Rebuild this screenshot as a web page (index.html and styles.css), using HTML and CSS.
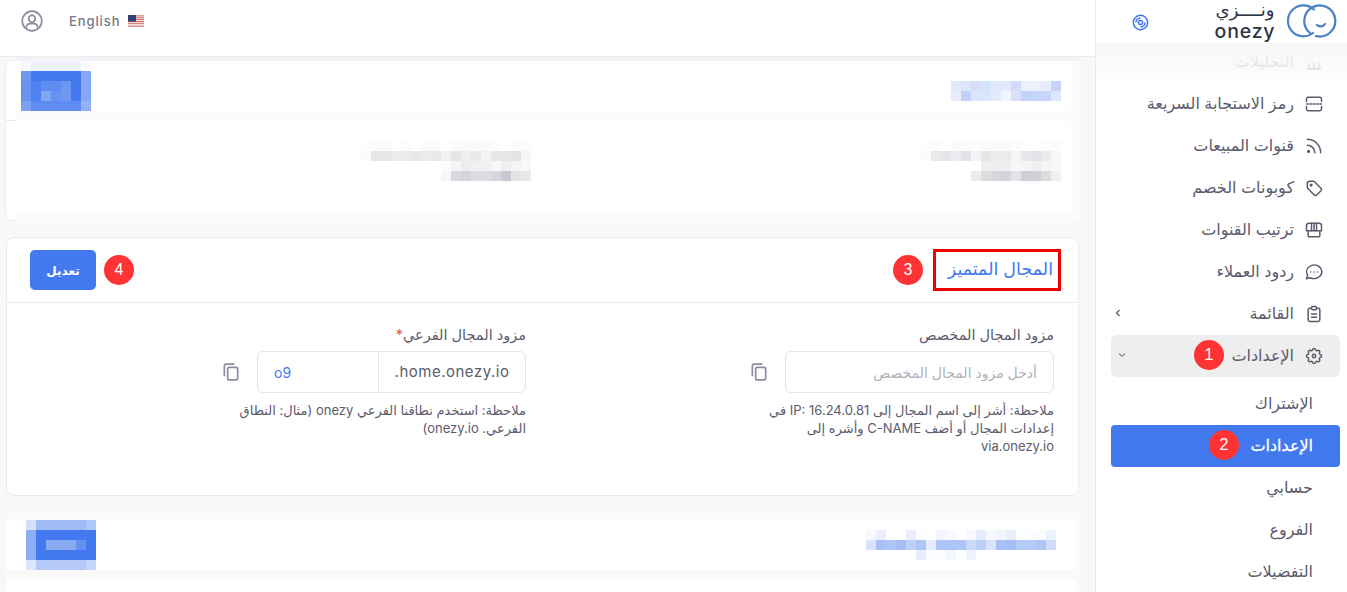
FILE: index.html
```html
<!DOCTYPE html>
<html lang="ar" dir="rtl">
<head>
    <meta charset="UTF-8">
    <meta name="viewport" content="width=device-width, initial-scale=1.0">
    <title>الإعدادات - onezy</title>
    <link rel="stylesheet" href="styles.css">
</head>
<body>
    <aside class="sidebar">
        <div class="brand">
            <svg class="brand-mark" viewBox="0 0 50 34" fill="none" stroke="#4a80c4" stroke-width="2.200" stroke-linecap="round">
                <path d="M27 5.500A15.500 15.500 0 1 0 26 29"/>
                <path d="M23 29A15.500 15.500 0 1 1 29 32"/>
                <path d="M30 21c2 2 6 2 8-1"/>
            </svg>
            <div class="brand-name">
                <span class="brand-ar">ونــــزي</span>
                <span class="brand-en" dir="ltr">onezy</span>
            </div>
            <svg class="brand-disc" viewBox="0 0 18 18" fill="none" stroke="#4278ef" stroke-width="1.600">
                <circle cx="9" cy="9" r="7.600"/>
                <circle cx="9" cy="9" r="2.200"/>
                <path d="M4.200 9A4.800 4.800 0 0 1 9 4.200M13.800 9A4.800 4.800 0 0 1 9 13.800"/>
            </svg>
        </div>
        <nav class="menu">
            <div class="menu-fade"></div>
            <a class="menu-item">
                <svg class="menu-icon" viewBox="0 0 24 24"><path d="M4 20h16M6 20v-7M12 20v-7M18 20v-7"/></svg>
                <span>التحليلات</span>
            </a>
            <a class="menu-item">
                <svg class="menu-icon" viewBox="0 0 24 24"><path d="M3 9V6a2 2 0 0 1 2-2h14a2 2 0 0 1 2 2v3M3 15v3a2 2 0 0 0 2 2h14a2 2 0 0 0 2-2v-3"/><path d="M3 12h18" stroke-dasharray="2 2"/></svg>
                <span>رمز الاستجابة السريعة</span>
            </a>
            <a class="menu-item">
                <svg class="menu-icon" viewBox="0 0 24 24"><circle cx="5.500" cy="18.500" r="1"/><path d="M4 11a9 9 0 0 1 9 9M4 4a16 16 0 0 1 16 16"/></svg>
                <span>قنوات المبيعات</span>
            </a>
            <a class="menu-item">
                <svg class="menu-icon" viewBox="0 0 24 24"><circle cx="8.500" cy="8.500" r="1"/><path d="M4 7v4.200a2 2 0 0 0 .6 1.400l7.800 7.800a2 2 0 0 0 2.800 0l5.200-5.200a2 2 0 0 0 0-2.800L12.600 4.600A2 2 0 0 0 11.200 4H7a3 3 0 0 0-3 3z"/></svg>
                <span>كوبونات الخصم</span>
            </a>
            <a class="menu-item">
                <svg class="menu-icon" viewBox="0 0 24 24"><path d="M5 13v6a1 1 0 0 0 1 1h12a1 1 0 0 0 1-1v-6"/><path d="M6 4h12a3 3 0 0 1 3 3v6H3V7a3 3 0 0 1 3-3z"/><path d="M9 4v9M12 4v9M15 4v9"/></svg>
                <span>ترتيب القنوات</span>
            </a>
            <a class="menu-item">
                <svg class="menu-icon" viewBox="0 0 24 24"><path d="M3 20l1.400-4.200C2 12.300 3 8 6.600 5.400c3.600-2.500 8.700-2.300 12 .5 3.300 2.800 3.800 7.400 1 10.700-2.800 3.300-8 4.300-12.300 2.300L3 20z"/><path d="M8 12h.01M12 12h.01M16 12h.01"/></svg>
                <span>ردود العملاء</span>
            </a>
            <a class="menu-item">
                <svg class="menu-icon" viewBox="0 0 24 24"><path d="M9 5H7a2 2 0 0 0-2 2v12a2 2 0 0 0 2 2h10a2 2 0 0 0 2-2V7a2 2 0 0 0-2-2h-2"/><rect x="9" y="3" width="6" height="4" rx="1.500"/><path d="M9 12h6M9 16h6"/></svg>
                <span>القائمة</span>
                <svg class="menu-chevron" viewBox="0 0 10 10"><path d="M6.500 2L3.500 5l3 3"/></svg>
            </a>
            <a class="menu-item menu-item-open">
                <svg class="menu-icon" viewBox="0 0 24 24"><circle cx="12" cy="12" r="2"/><path d="M10.300 4.300c.4-1.700 3-1.700 3.400 0a1.700 1.700 0 0 0 2.600 1.100c1.500-.9 3.300.8 2.400 2.400a1.700 1.700 0 0 0 1 2.500c1.800.4 1.800 3 0 3.400a1.700 1.700 0 0 0-1 2.600c.9 1.500-.9 3.300-2.400 2.400a1.700 1.700 0 0 0-2.600 1c-.4 1.800-3 1.800-3.400 0a1.700 1.700 0 0 0-2.500-1c-1.600.9-3.300-.9-2.400-2.400a1.700 1.700 0 0 0-1.100-2.600c-1.700-.4-1.700-3 0-3.400a1.700 1.700 0 0 0 1.100-2.500c-.9-1.600.8-3.300 2.400-2.400a1.700 1.700 0 0 0 2.500-1.100z"/></svg>
                <span>الإعدادات</span>
                <svg class="menu-chevron menu-chevron-light" viewBox="0 0 10 10"><path d="M2 3.500l3 3 3-3"/></svg>
                <b class="badge badge-one">1</b>
            </a>
            <div class="submenu">
                <a class="sub-item">الإشتراك</a>
                <a class="sub-item sub-item-active">الإعدادات<b class="badge badge-two">2</b></a>
                <a class="sub-item">حسابي</a>
                <a class="sub-item">الفروع</a>
                <a class="sub-item">التفضيلات</a>
            </div>
        </nav>
    </aside>

    <main class="main">
        <header class="topbar" dir="ltr">
            <svg class="topbar-user" viewBox="0 0 22 22" fill="none" stroke="#8d8c9f" stroke-width="1.700">
                <circle cx="11" cy="11" r="9.800"/>
                <circle cx="11" cy="8.700" r="3.300"/>
                <path d="M5 18c.6-3 2.600-4.300 4-4.300h4c1.400 0 3.400 1.300 4 4.300"/>
            </svg>
            <span class="topbar-lang">English</span>
            <svg class="topbar-flag" viewBox="0 0 16 12">
                <rect width="16" height="12" fill="#f3e6e6"/>
                <path d="M0 .9h16M0 2.800h16M0 4.600h16M0 6.500h16M0 8.300h16M0 11.100h16" stroke="#d0706f" stroke-width="1"/>
                <rect width="8" height="6.500" fill="#34406f"/>
            </svg>
        </header>

        <svg class="shot" width="1095" height="180" viewBox="0 57 1095 180">
            <rect x="0" y="57" width="1095" height="180" fill="#f8f8f8"/>
            <rect x="5.500" y="60.500" width="1075" height="160" rx="7" fill="#fff" stroke="#e9e9f3"/>
            <rect x="6" y="120" width="10" height="1" fill="#e9e9f3"/>
            <rect x="16" y="57" width="1067" height="4" fill="#f3f3f5"/>
            <rect x="16" y="111" width="1055" height="10" fill="#fafafa"/>
            <rect x="16" y="211" width="1065" height="10" fill="#fafafa"/>
            <rect x="1071" y="61" width="10" height="160" fill="#fbfbfb"/>
            <g class="mosaic">
                <rect x="21" y="61" fill="#f5f8fe"/><rect x="31" y="61" fill="#edf2fd"/><rect x="41" y="61" fill="#edf2fd"/><rect x="51" y="61" fill="#edf2fd"/><rect x="61" y="61" fill="#edf2fd"/><rect x="71" y="61" fill="#edf2fd"/><rect x="81" y="61" fill="#fafbff"/>
                <rect x="21" y="71" fill="#6e97f2"/><rect x="31" y="71" fill="#4279ef"/><rect x="41" y="71" fill="#4279ef"/><rect x="51" y="71" fill="#4279ef"/><rect x="61" y="71" fill="#4279ef"/><rect x="71" y="71" fill="#4279ef"/><rect x="81" y="71" fill="#86a7f4"/>
                <rect x="21" y="81" fill="#6792f1"/><rect x="31" y="81" fill="#4f82f0"/><rect x="41" y="81" fill="#5e8cf1"/><rect x="51" y="81" fill="#5e8cf1"/><rect x="61" y="81" fill="#6e97f2"/><rect x="71" y="81" fill="#4279ef"/><rect x="81" y="81" fill="#86a7f4"/>
                <rect x="21" y="91" fill="#6792f1"/><rect x="31" y="91" fill="#4f82f0"/><rect x="41" y="91" fill="#83a6f4"/><rect x="51" y="91" fill="#6792f1"/><rect x="61" y="91" fill="#6e97f2"/><rect x="71" y="91" fill="#4279ef"/><rect x="81" y="91" fill="#86a7f4"/>
                <rect x="21" y="101" fill="#7ca0f3"/><rect x="31" y="101" fill="#5e8cf1"/><rect x="41" y="101" fill="#5e8cf1"/><rect x="51" y="101" fill="#5e8cf1"/><rect x="61" y="101" fill="#5e8cf1"/><rect x="71" y="101" fill="#5e8cf1"/><rect x="81" y="101" fill="#94b1f5"/>

                <rect x="951" y="81" fill="#e3e8fb"/><rect x="961" y="81" fill="#d9e6fc"/><rect x="971" y="81" fill="#d6dcf9"/><rect x="981" y="81" fill="#d7e5fb"/><rect x="991" y="81" fill="#e2e9fc"/><rect x="1001" y="81" fill="#e2e9fc"/><rect x="1011" y="81" fill="#d0dcfa"/><rect x="1021" y="81" fill="#ebf0fd"/><rect x="1031" y="81" fill="#ebf0fd"/><rect x="1041" y="81" fill="#e6ecfc"/><rect x="1051" y="81" fill="#c5d4f9"/>
                <rect x="951" y="91" fill="#e9ecfb"/><rect x="961" y="91" fill="#c0d2f9"/><rect x="971" y="91" fill="#dbe5fc"/><rect x="981" y="91" fill="#dbe5fc"/><rect x="991" y="91" fill="#e0ebfc"/><rect x="1001" y="91" fill="#f2f5fe"/><rect x="1011" y="91" fill="#d8e2fb"/><rect x="1021" y="91" fill="#c2d2f9"/><rect x="1031" y="91" fill="#c6d6fa"/><rect x="1041" y="91" fill="#c6d6fa"/><rect x="1051" y="91" fill="#dce6fc"/>

                <rect x="921" y="141" fill="#fdfdfd"/><rect x="931" y="141" fill="#fbfbfb"/><rect x="951" y="141" fill="#fbfbfb"/><rect x="961" y="141" fill="#fbfbfb"/><rect x="971" y="141" fill="#fcfcfc"/><rect x="981" y="141" fill="#fafafa"/><rect x="991" y="141" fill="#fafafa"/><rect x="1001" y="141" fill="#fafafa"/><rect x="1011" y="141" fill="#fcfcfc"/><rect x="1021" y="141" fill="#fdfdfd"/><rect x="1041" y="141" fill="#fbfbfb"/><rect x="1051" y="141" fill="#fbfbfb"/>
                <rect x="921" y="151" fill="#fbfbfb"/><rect x="931" y="151" fill="#e9e9ec"/><rect x="941" y="151" fill="#e6e6ea"/><rect x="951" y="151" fill="#ececef"/><rect x="961" y="151" fill="#e3e3e8"/><rect x="971" y="151" fill="#f3f3f4"/><rect x="981" y="151" fill="#e6e6ea"/><rect x="991" y="151" fill="#ececee"/><rect x="1001" y="151" fill="#eaeaed"/><rect x="1011" y="151" fill="#f5f5f6"/><rect x="1021" y="151" fill="#e7e7ea"/><rect x="1031" y="151" fill="#e4e4e8"/><rect x="1041" y="151" fill="#eaeaed"/><rect x="1051" y="151" fill="#f7f7f7"/>
                <rect x="981" y="161" fill="#eeeef0"/><rect x="991" y="161" fill="#eeeef0"/><rect x="1001" y="161" fill="#eeeef0"/><rect x="1011" y="161" fill="#f6f6f6"/><rect x="1021" y="161" fill="#f4f4f5"/><rect x="1031" y="161" fill="#f0f0f2"/><rect x="1041" y="161" fill="#f5f5f6"/><rect x="1051" y="161" fill="#f8f8f8"/>
                <rect x="971" y="171" fill="#ececee"/><rect x="981" y="171" fill="#dcdce1"/><rect x="991" y="171" fill="#d6d6dc"/><rect x="1001" y="171" fill="#d3d3d9"/><rect x="1011" y="171" fill="#e4e4e8"/><rect x="1021" y="171" fill="#cfcfd5"/><rect x="1031" y="171" fill="#cfcfd5"/><rect x="1041" y="171" fill="#dcdce1"/><rect x="1051" y="171" fill="#efeff1"/>

                <rect x="361" y="141" fill="#fdfdfd"/><rect x="371" y="141" fill="#fbfbfb"/><rect x="381" y="141" fill="#fbfbfb"/><rect x="401" y="141" fill="#fbfbfb"/><rect x="421" y="141" fill="#fbfbfb"/><rect x="431" y="141" fill="#fbfbfb"/><rect x="451" y="141" fill="#fbfbfb"/><rect x="461" y="141" fill="#f9f9f9"/><rect x="471" y="141" fill="#f9f9f9"/><rect x="481" y="141" fill="#fafafa"/><rect x="491" y="141" fill="#fcfcfc"/><rect x="511" y="141" fill="#fbfbfb"/><rect x="521" y="141" fill="#fbfbfb"/>
                <rect x="361" y="151" fill="#fbfbfb"/><rect x="371" y="151" fill="#e7e7ea"/><rect x="381" y="151" fill="#e7e7ea"/><rect x="391" y="151" fill="#ebebed"/><rect x="401" y="151" fill="#ebebed"/><rect x="411" y="151" fill="#e8e8ea"/><rect x="421" y="151" fill="#ebebed"/><rect x="431" y="151" fill="#e8e8ea"/><rect x="441" y="151" fill="#f1f1f2"/><rect x="451" y="151" fill="#e6e6e9"/><rect x="461" y="151" fill="#efeff1"/><rect x="471" y="151" fill="#eaeaed"/><rect x="481" y="151" fill="#f3f3f4"/><rect x="491" y="151" fill="#e7e7ea"/><rect x="501" y="151" fill="#e6e6e9"/><rect x="511" y="151" fill="#e3e3e7"/><rect x="521" y="151" fill="#f6f6f6"/>
                <rect x="441" y="161" fill="#fdfdfd"/><rect x="451" y="161" fill="#f5f5f6"/><rect x="461" y="161" fill="#ececee"/><rect x="471" y="161" fill="#f0f0f1"/><rect x="481" y="161" fill="#f1f1f2"/><rect x="491" y="161" fill="#f7f7f7"/><rect x="501" y="161" fill="#efeff1"/><rect x="511" y="161" fill="#f5f5f6"/><rect x="521" y="161" fill="#f8f8f8"/>
                <rect x="441" y="171" fill="#f7f7f7"/><rect x="451" y="171" fill="#d8d8de"/><rect x="461" y="171" fill="#d4d4da"/><rect x="471" y="171" fill="#dcdce1"/><rect x="481" y="171" fill="#dcdce1"/><rect x="491" y="171" fill="#d6d6dc"/><rect x="501" y="171" fill="#c9c9d1"/><rect x="511" y="171" fill="#e3e3e7"/><rect x="521" y="171" fill="#e8e8eb"/>
            </g>
        </svg>

        <section class="card">
            <div class="card-head">
                <h2 class="card-title">المجال المتميز<b class="badge badge-three">3</b></h2>
                <button class="btn" type="button">تعديل<b class="badge badge-four">4</b></button>
            </div>
            <div class="card-body">
                <div class="field">
                    <label class="field-label">مزود المجال المخصص</label>
                    <div class="field-row">
                        <input class="input" type="text" placeholder="أدخل مزود المجال المخصص">
                        <svg class="copy" viewBox="0 0 24 24"><path d="M16 2.500H6a2 2 0 0 0-2 2V17"/><rect x="8" y="6.500" width="12" height="15" rx="2"/></svg>
                    </div>
                    <p class="note">ملاحظة: أشر إلى اسم المجال إلى IP: 16.24.0.81 في إعدادات المجال أو أضف C-NAME وأشره إلى via.onezy.io</p>
                </div>
                <div class="field">
                    <label class="field-label">مزود المجال الفرعي<i class="required">*</i></label>
                    <div class="field-row">
                        <div class="input-group">
                            <span class="input-prefix" dir="ltr">.home.onezy.io</span>
                            <input class="input-value" type="text" value="o9" dir="ltr">
                        </div>
                        <svg class="copy" viewBox="0 0 24 24"><path d="M16 2.500H6a2 2 0 0 0-2 2V17"/><rect x="8" y="6.500" width="12" height="15" rx="2"/></svg>
                    </div>
                    <p class="note">ملاحظة: استخدم نطاقنا الفرعي onezy (مثال: النطاق الفرعي. onezy.io)</p>
                </div>
            </div>
        </section>

        <svg class="shot" width="1095" height="96" viewBox="0 496 1095 96">
            <rect x="0" y="496" width="1095" height="96" fill="#f8f8f8"/>
            <rect x="6" y="510" width="1075" height="82" fill="#fafafa"/>
            <rect x="6" y="520" width="1070" height="50" fill="#fff"/>
            <rect x="6" y="580" width="1070" height="12" fill="#fff"/>
            <g class="mosaic">
                <rect x="26" y="520" fill="#d5dffb"/><rect x="36" y="520" fill="#a0bcf6"/><rect x="46" y="520" fill="#a0bcf6"/><rect x="56" y="520" fill="#a0bcf6"/><rect x="66" y="520" fill="#a0bcf6"/><rect x="76" y="520" fill="#a0bcf6"/><rect x="86" y="520" fill="#b0c8f8"/>
                <rect x="26" y="530" fill="#8dadf3"/><rect x="36" y="530" fill="#4279ef"/><rect x="46" y="530" fill="#4279ef"/><rect x="56" y="530" fill="#4279ef"/><rect x="66" y="530" fill="#4279ef"/><rect x="76" y="530" fill="#4279ef"/><rect x="86" y="530" fill="#4279ef"/>
                <rect x="26" y="540" fill="#8dadf3"/><rect x="36" y="540" fill="#4279ef"/><rect x="46" y="540" fill="#8aabf3"/><rect x="56" y="540" fill="#8aabf3"/><rect x="66" y="540" fill="#8aabf3"/><rect x="76" y="540" fill="#6690f0"/><rect x="86" y="540" fill="#4279ef"/>
                <rect x="26" y="550" fill="#8dadf3"/><rect x="36" y="550" fill="#4279ef"/><rect x="46" y="550" fill="#4279ef"/><rect x="56" y="550" fill="#4279ef"/><rect x="66" y="550" fill="#4279ef"/><rect x="76" y="550" fill="#4279ef"/><rect x="86" y="550" fill="#4279ef"/>
                <rect x="26" y="560" fill="#dee6fc"/><rect x="36" y="560" fill="#b5caf8"/><rect x="46" y="560" fill="#b5caf8"/><rect x="56" y="560" fill="#b5caf8"/><rect x="66" y="560" fill="#b5caf8"/><rect x="76" y="560" fill="#b5caf8"/><rect x="86" y="560" fill="#c5d5fa"/>

                <rect x="866" y="530" fill="#f8f9fe"/><rect x="876" y="530" fill="#e9effc"/><rect x="906" y="530" fill="#e9effc"/><rect x="916" y="530" fill="#fbfcff"/><rect x="936" y="530" fill="#f1f5fe"/><rect x="946" y="530" fill="#f8f9fe"/><rect x="966" y="530" fill="#f8f9fe"/><rect x="976" y="530" fill="#e6ecfc"/><rect x="986" y="530" fill="#f8f9fe"/><rect x="996" y="530" fill="#f1f5fe"/><rect x="1006" y="530" fill="#e8eefc"/><rect x="1026" y="530" fill="#fbfcff"/><rect x="1036" y="530" fill="#fbfcff"/><rect x="1046" y="530" fill="#eef2fe"/>
                <rect x="866" y="540" fill="#d8e3fb"/><rect x="876" y="540" fill="#a8c1f6"/><rect x="886" y="540" fill="#adc5f7"/><rect x="896" y="540" fill="#a5bff6"/><rect x="906" y="540" fill="#bccff8"/><rect x="916" y="540" fill="#aec6f7"/><rect x="926" y="540" fill="#e6ecfc"/><rect x="936" y="540" fill="#aec6f7"/><rect x="946" y="540" fill="#aec6f7"/><rect x="956" y="540" fill="#aec6f7"/><rect x="966" y="540" fill="#ccdaf9"/><rect x="976" y="540" fill="#bccff8"/><rect x="986" y="540" fill="#dae4fb"/><rect x="996" y="540" fill="#a8c1f6"/><rect x="1006" y="540" fill="#a5bff6"/><rect x="1016" y="540" fill="#b4caf7"/><rect x="1026" y="540" fill="#b4caf7"/><rect x="1036" y="540" fill="#adc5f7"/><rect x="1046" y="540" fill="#cfdcfa"/>
                <rect x="916" y="550" fill="#e5ecfc"/><rect x="926" y="550" fill="#fbfcff"/><rect x="936" y="550" fill="#fbfcff"/><rect x="946" y="550" fill="#f3f6fe"/><rect x="966" y="550" fill="#eef2fd"/>
            </g>
        </svg>
    </main>
</body>
</html>
```

FILE: styles.css
```css
* {
    box-sizing: border-box;
}
body {
    font-family: Inter, "DejaVu Sans", sans-serif;
    background-color: #f8f8f8;
    color: #5c5b6e;
    margin: 0;
    height: 592px;
    overflow: hidden;
    display: flex;
}
.sidebar {
    width: 252px;
    flex-shrink: 0;
    height: 592px;
    overflow: hidden;
    background-color: #fff;
    border-left: 1px solid #e8e8f4;
}
.brand {
    height: 41px;
    display: flex;
    align-items: center;
    gap: 13px;
    padding-right: 10px;
}
.brand-mark {
    width: 50px;
    height: 34px;
}
.brand-name {
    width: 58px;
    display: flex;
    flex-direction: column;
    align-items: center;
    gap: 3px;
    color: #2c3545;
}
.brand-ar {
    height: 18px;
    font-size: 18px;
    line-height: 18px;
}
.brand-en {
    height: 18px;
    font-size: 19.500px;
    font-weight: 500;
    letter-spacing: 0.8px;
    line-height: 18px;
}
.brand-disc {
    width: 17px;
    height: 17px;
    margin-right: 54px;
    margin-top: 3px;
}
.menu {
    position: relative;
}
.menu-fade {
    position: absolute;
    top: 2px;
    left: 0;
    right: 0;
    height: 42px;
    z-index: 1;
    background: linear-gradient(rgba(246, 246, 246, 0.95), rgba(250, 250, 250, 0.85) 60%, rgba(255, 255, 255, 0));
}
.menu-item {
    position: relative;
    height: 42px;
    padding-bottom: 2px;
    display: flex;
    align-items: center;
    gap: 10px;
    padding-right: 23px;
    font-size: 16px;
}
.menu-icon {
    width: 20px;
    height: 20px;
    margin-top: 2px;
    fill: none;
    stroke: #5c5b6e;
    stroke-width: 1.8;
    stroke-linecap: round;
    stroke-linejoin: round;
}
.menu-chevron {
    width: 10px;
    height: 10px;
    margin-right: auto;
    margin-left: 17px;
    fill: none;
    stroke: #5c5b6e;
    stroke-width: 1.200;
}
.menu-chevron-light {
    stroke: #8d8c9f;
    margin-left: 6px;
}
.menu-item-open {
    margin: 0 7px 6px 15px;
    padding-right: 16px;
    background-color: #eeeeee;
    border-radius: 6px;
}
.sub-item {
    position: relative;
    height: 42px;
    padding-bottom: 2px;
    display: flex;
    align-items: center;
    padding-right: 27px;
    margin: 0 7px 0 15px;
    font-size: 16px;
}
.sub-item-active {
    background-color: #4279ef;
    color: #fff;
    -webkit-text-stroke: 0.3px #fff;
    border-radius: 4px;
}
.badge {
    position: absolute;
    width: 30px;
    height: 30px;
    border-radius: 50%;
    background-color: #ff3333;
    color: #fff;
    font-family: "Liberation Sans", sans-serif;
    font-size: 16px;
    font-weight: 400;
    line-height: 30px;
    text-align: center;
    -webkit-text-stroke: 0;
}
.badge-one {
    right: 116px;
    top: 5px;
}
.badge-two {
    right: 101px;
    top: 5px;
}
.badge-three {
    left: -43px;
    top: 3px;
}
.badge-four {
    right: -38px;
    top: 5px;
}
.main {
    width: 1095px;
    flex-shrink: 0;
}
.topbar {
    height: 57px;
    background-color: #fff;
    border-bottom: 1px solid #ececf0;
    display: flex;
    align-items: center;
    padding: 0 0 14px 21px;
}
.topbar-user {
    width: 22px;
    height: 22px;
}
.topbar-lang {
    margin-left: 26px;
    font-size: 13px;
    font-weight: 500;
    letter-spacing: 0.9px;
    color: #77768a;
}
.topbar-flag {
    width: 16px;
    height: 12px;
    margin-left: 8px;
}
.shot {
    display: block;
}
.mosaic rect {
    width: 10px;
    height: 10px;
}
.card {
    width: 1073px;
    height: 259px;
    margin-right: 16px;
    background-color: #fff;
    border: 1px solid #e9e9f3;
    border-radius: 8px;
}
.card-head {
    height: 65px;
    padding: 0 17px 0 23px;
    border-bottom: 1px solid #e9e9f3;
    display: flex;
    align-items: center;
    justify-content: space-between;
}
.card-title {
    position: relative;
    width: 128px;
    height: 42px;
    margin: 0;
    padding-right: 5px;
    border: 3px solid #f00000;
    color: #4279ef;
    font-size: 17.500px;
    font-weight: 400;
    line-height: 34px;
    white-space: nowrap;
}
.btn {
    position: relative;
    width: 66px;
    height: 40px;
    padding: 0;
    border: none;
    border-radius: 5px;
    background-color: #4279ef;
    color: #fff;
    font-family: inherit;
    font-size: 12px;
    font-weight: 700;
}
.card-body {
    display: grid;
    grid-template-columns: 528px 1fr;
    padding: 24px 24px 0 0;
}
.field {
    width: 305px;
}
.field-label {
    display: block;
    height: 18px;
    margin-bottom: 6px;
    font-size: 14.500px;
    line-height: 16px;
}
.required {
    color: #ea5455;
    font-style: normal;
}
.field-row {
    display: flex;
    align-items: center;
    gap: 16px;
}
.input {
    width: 269px;
    height: 42px;
    padding: 0 16px;
    border: 1px solid #e4e4ea;
    border-radius: 6px;
    font-family: inherit;
    font-size: 14px;
}
.input::placeholder {
    color: #b0b0bb;
}
.input-group {
    width: 269px;
    height: 42px;
    display: flex;
    border: 1px solid #e4e4ea;
    border-radius: 6px;
}
.input-prefix {
    width: 148px;
    border-left: 1px solid #e4e4ea;
    font-size: 15px;
    line-height: 40px;
    text-align: center;
    letter-spacing: 0.5px;
}
.input-value {
    width: 120px;
    padding: 0 16px;
    border: none;
    border-radius: 6px;
    background: none;
    color: #4279ef;
    font-family: inherit;
    font-size: 14px;
}
.copy {
    width: 20px;
    height: 20px;
    fill: none;
    stroke: #8d8c9f;
    stroke-width: 2;
}
.note {
    margin: 8px 0 0;
    font-size: 13px;
    line-height: 18px;
}
```
